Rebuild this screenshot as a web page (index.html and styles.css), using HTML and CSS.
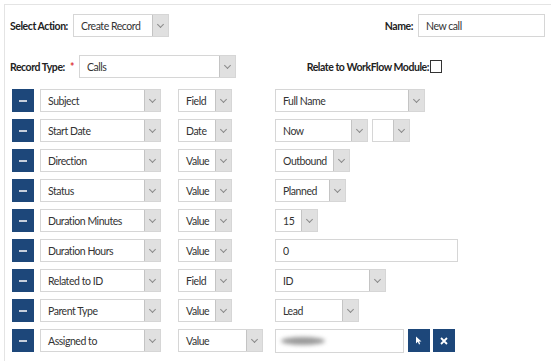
FILE: index.html
```html
<!DOCTYPE html>
<html lang="en">
<head>
  <meta charset="UTF-8">
  <title>Workflow Action</title>
  <link rel="stylesheet" href="styles.css">
</head>
<body>
  <div class="panel">
    <div class="head-row first">
      <div class="field-group">
        <label class="lbl">Select Action:</label>
        <div class="sel w-action"><span class="val">Create Record</span><span class="caret"></span></div>
      </div>
      <div class="field-group">
        <label class="lbl">Name:</label>
        <input class="txt w-name" type="text" value="New call">
      </div>
    </div>

    <div class="head-row second">
      <div class="field-group">
        <label class="lbl">Record Type: <span class="req">*</span></label>
        <div class="sel w-type"><span class="val">Calls</span><span class="caret"></span></div>
      </div>
      <div class="field-group relate">
        <label class="lbl">Relate to WorkFlow Module:</label>
        <span class="check"></span>
      </div>
    </div>

    <div class="rows">
      <div class="row">
        <button class="btn minus"><span></span></button>
        <div class="sel w-field"><span class="val">Subject</span><span class="caret"></span></div>
        <div class="type-cell"><div class="sel w-kind"><span class="val">Field</span><span class="caret"></span></div></div>
        <div class="sel w-fullname"><span class="val">Full Name</span><span class="caret"></span></div>
      </div>
      <div class="row">
        <button class="btn minus"><span></span></button>
        <div class="sel w-field"><span class="val">Start Date</span><span class="caret"></span></div>
        <div class="type-cell"><div class="sel w-kind"><span class="val">Date</span><span class="caret"></span></div></div>
        <div class="sel w-now"><span class="val">Now</span><span class="caret"></span></div>
        <div class="sel w-blank"><span class="val"></span><span class="caret"></span></div>
      </div>
      <div class="row">
        <button class="btn minus"><span></span></button>
        <div class="sel w-field"><span class="val">Direction</span><span class="caret"></span></div>
        <div class="type-cell"><div class="sel w-kind"><span class="val">Value</span><span class="caret"></span></div></div>
        <div class="sel w-outbound"><span class="val">Outbound</span><span class="caret"></span></div>
      </div>
      <div class="row">
        <button class="btn minus"><span></span></button>
        <div class="sel w-field"><span class="val">Status</span><span class="caret"></span></div>
        <div class="type-cell"><div class="sel w-kind"><span class="val">Value</span><span class="caret"></span></div></div>
        <div class="sel w-planned"><span class="val">Planned</span><span class="caret"></span></div>
      </div>
      <div class="row">
        <button class="btn minus"><span></span></button>
        <div class="sel w-field"><span class="val">Duration Minutes</span><span class="caret"></span></div>
        <div class="type-cell"><div class="sel w-kind"><span class="val">Value</span><span class="caret"></span></div></div>
        <div class="sel w-mins"><span class="val">15</span><span class="caret"></span></div>
      </div>
      <div class="row">
        <button class="btn minus"><span></span></button>
        <div class="sel w-field"><span class="val">Duration Hours</span><span class="caret"></span></div>
        <div class="type-cell"><div class="sel w-kind"><span class="val">Value</span><span class="caret"></span></div></div>
        <input class="txt w-hours" type="text" value="0">
      </div>
      <div class="row">
        <button class="btn minus"><span></span></button>
        <div class="sel w-field"><span class="val">Related to ID</span><span class="caret"></span></div>
        <div class="type-cell"><div class="sel w-kind"><span class="val">Field</span><span class="caret"></span></div></div>
        <div class="sel w-id"><span class="val">ID</span><span class="caret"></span></div>
      </div>
      <div class="row">
        <button class="btn minus"><span></span></button>
        <div class="sel w-field"><span class="val">Parent Type</span><span class="caret"></span></div>
        <div class="type-cell"><div class="sel w-kind"><span class="val">Value</span><span class="caret"></span></div></div>
        <div class="sel w-lead"><span class="val">Lead</span><span class="caret"></span></div>
      </div>
      <div class="row">
        <button class="btn minus"><span></span></button>
        <div class="sel w-field"><span class="val">Assigned to</span><span class="caret"></span></div>
        <div class="type-cell"><div class="sel w-kind-wide"><span class="val">Value</span><span class="caret"></span></div></div>
        <div class="txt w-assigned"><span class="blur"></span></div>
        <button class="btn icon">
          <svg width="8" height="9" viewBox="0 0 8 9"><path d="M1 0.5 L1 7.5 L2.8 5.8 L4 8.5 L5.2 8 L4.1 5.4 L6.5 5.4 Z" fill="#fff"/></svg>
        </button>
        <button class="btn icon">
          <svg width="8" height="8" viewBox="0 0 8 8"><path d="M1 1 L7 7 M7 1 L1 7" stroke="#fff" stroke-width="1.8"/></svg>
        </button>
      </div>
    </div>
  </div>
</body>
</html>
```

FILE: styles.css
```css
body {
  margin: 0;
  font-family: Lato, "Open Sans", sans-serif;
  font-size: 10.5px;
  letter-spacing: -0.45px;
  color: #333;
  background: #fff;
  overflow: hidden;
}
.panel {
  box-sizing: border-box;
  margin: 4px 0 0 4px;
  border-top: 1px solid #e4e4e4;
  border-left: 1px solid #e4e4e4;
  padding: 9px 0 0 5px;
  height: calc(100vh - 4px);
  overflow: hidden;
}
.head-row {
  display: flex;
  justify-content: space-between;
  align-items: center;
  padding-right: 6px;
}
.head-row.second {
  margin-top: 18px;
  padding-right: 109px;
}
.field-group {
  display: flex;
  align-items: center;
}
.lbl {
  font-weight: bold;
  color: #222;
  margin-right: 5px;
}
.req {
  color: #d33;
  margin-left: 3px;
}
.relate .lbl {
  margin-right: 1px;
}
.check {
  width: 10px;
  height: 11px;
  border: 1px solid #333;
  background: #fff;
}

.sel, .txt {
  box-sizing: border-box;
  height: 23px;
  border: 1px solid #d6d6d6;
  background: #fff;
  display: flex;
  align-items: center;
  font-family: inherit;
  font-size: 10.5px;
  letter-spacing: -0.45px;
  color: #333;
}
.sel .val {
  flex: 1;
  padding-left: 7px;
  white-space: nowrap;
  overflow: hidden;
}
.sel .caret {
  width: 15px;
  height: 100%;
  background: #e0e0e0;
  border-left: 1px solid #c4c4c4;
  position: relative;
}
.sel .caret::after {
  content: "";
  position: absolute;
  left: 5px;
  top: 7px;
  width: 4px;
  height: 4px;
  border-right: 1px solid #8a8a8a;
  border-bottom: 1px solid #8a8a8a;
  transform: rotate(45deg);
}
.txt {
  padding: 0 7px;
  outline: none;
}

.w-action { width: 96px; }
.w-name { width: 127px; }
.w-type { width: 157px; }

.rows {
  margin-top: 11px;
  padding-left: 2px;
}
.row {
  display: flex;
  align-items: center;
  height: 23px;
  margin-bottom: 7px;
}
.btn {
  width: 22px;
  height: 23px;
  border: none;
  padding: 0;
  background: #1d477a;
  display: flex;
  align-items: center;
  justify-content: center;
  cursor: pointer;
}
.btn.minus span {
  width: 8px;
  height: 2px;
  background: #c7cfdb;
}
.btn.minus {
  margin-right: 6px;
}
.btn.icon {
  margin-left: 4px;
}
.btn.icon + .btn.icon {
  margin-left: 3px;
}

.w-field { width: 121px; }
.type-cell {
  width: 97px;
  margin-left: 17px;
}
.w-kind { width: 54px; }
.w-kind-wide { width: 85px; }

.w-fullname { width: 150px; }
.w-now { width: 93px; }
.w-blank { width: 38px; margin-left: 4px; }
.w-outbound { width: 75px; }
.w-planned { width: 71px; }
.w-mins { width: 43px; }
.w-hours { width: 183px; }
.w-id { width: 111px; }
.w-lead { width: 84px; }
.w-assigned { width: 129px; height: 24px; }

.blur {
  display: block;
  width: 44px;
  height: 8px;
  margin-left: -2px;
  border-radius: 50%;
  background: #999;
  filter: blur(2px);
}
```
